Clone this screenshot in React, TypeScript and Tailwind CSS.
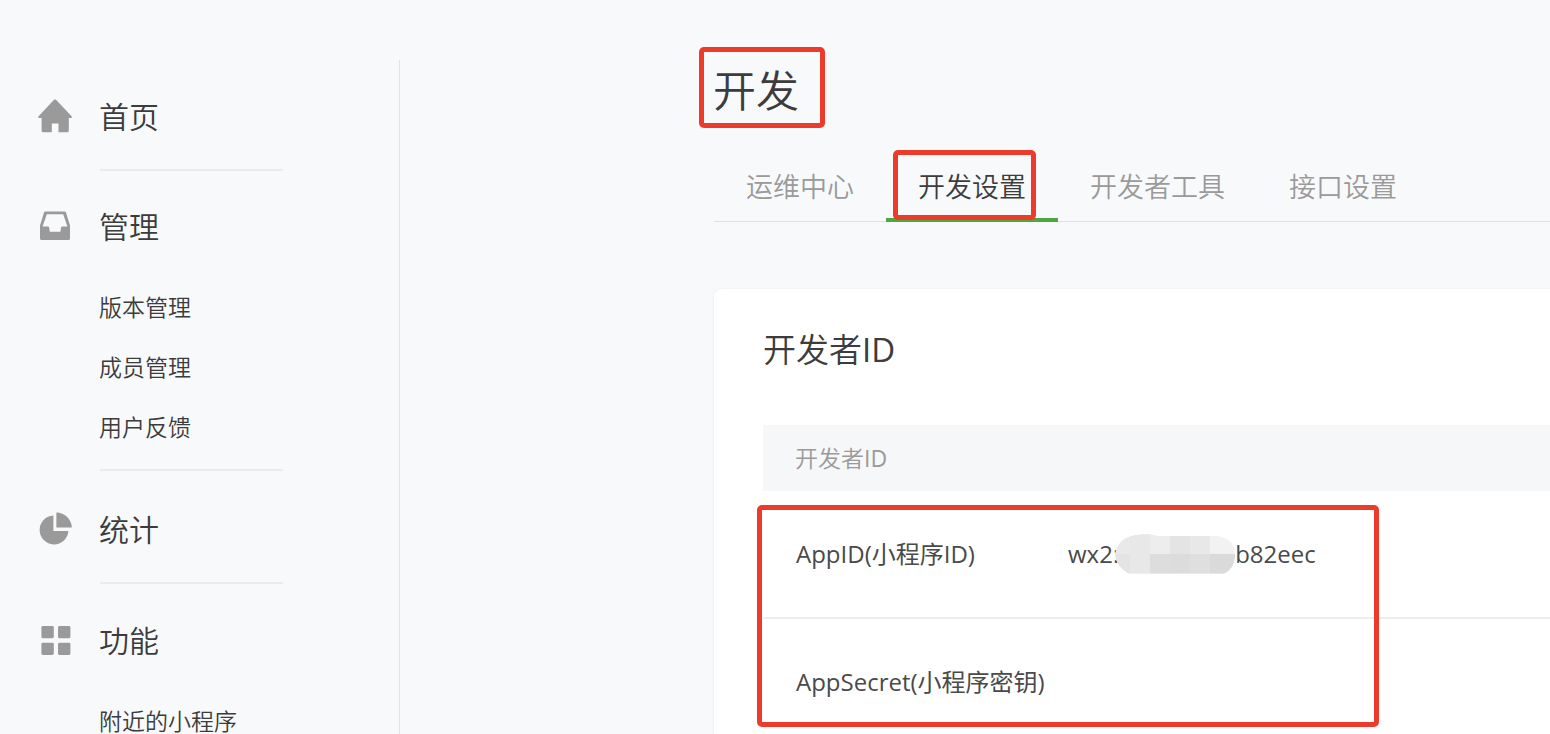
import type { ReactNode } from "react";

const HomeIcon = () => (
  <svg viewBox="0 0 36 36" className="size-9" fill="#9a9a9a" aria-hidden="true">
    <path d="M18 .2 Q18.4 .2 19 .8 L34.6 17.2 Q35.8 18.8 34 19 L31.8 19 L31.8 31.8 Q31.8 33.2 30.4 33.2 L21.5 33.2 L21.5 24.6 L14.8 24.6 L14.8 33.2 L6 33.2 Q4.6 33.2 4.6 31.8 L4.6 19 L2 19 Q.4 18.8 1.6 17.2 L17 .8 Q17.6 .2 18 .2Z" />
  </svg>
);

const InboxIcon = () => (
  <svg viewBox="0 0 36 36" className="size-9" fill="#9a9a9a" aria-hidden="true">
    <path
      fillRule="evenodd"
      d="M8.6 2.4 H27.4 Q28.6 2.4 29 3.6 L33 16.4 V29.4 Q33 31 31.4 31 H4.6 Q3 31 3 29.4 V16.4 L7 3.6 Q7.4 2.4 8.6 2.4Z M9.8 5.2 L5.6 17.4 H11 Q12 17.4 12.2 18.8 L12.8 22.8 H23.4 L24 18.8 Q24.2 17.4 25.2 17.4 H30.4 L26.2 5.2Z"
    />
  </svg>
);

const PieIcon = () => (
  <svg viewBox="0 0 36 36" className="size-9" fill="#9a9a9a" aria-hidden="true">
    <path d="M16.4 3.6 V19 H31.4 A14.4 14.4 0 1 1 16.4 3.6Z" />
    <path d="M19.4 .4 A15.6 15.6 0 0 1 34.8 15.6 H19.4Z" />
  </svg>
);

const GridIcon = () => (
  <svg viewBox="0 0 36 36" className="size-9" fill="#9a9a9a" aria-hidden="true">
    <rect x="4.4" y="3" width="12.4" height="12.2" rx="1.4" />
    <rect x="21" y="3" width="12.4" height="12.2" rx="1.4" />
    <rect x="4.4" y="19.8" width="12.4" height="12.2" rx="1.4" />
    <rect x="21" y="19.8" width="12.4" height="12.2" rx="1.4" />
  </svg>
);

function Highlight({ className }: { className: string }) {
  return (
    <span
      aria-hidden="true"
      className={`pointer-events-none absolute z-10 rounded-[5px] border-5 border-[#ed3b2b] ${className}`}
    />
  );
}

function NavHeading({ icon, children }: { icon: ReactNode; children: ReactNode }) {
  return (
    <a href="#" className="flex h-[42px] items-center pl-[37px] text-[30px] leading-[42px]">
      <span className="w-[62px]">{icon}</span>
      {children}
    </a>
  );
}

function NavList({ items }: { items: string[] }) {
  return (
    <ul className="mt-[29px] pl-[99px] text-[23px] leading-[60px]">
      {items.map((item) => (
        <li key={item} className="h-[60px]">
          <a href="#">{item}</a>
        </li>
      ))}
    </ul>
  );
}

const Divider = () => <hr className="ml-[100px] w-[183px] border-t-2 border-[#ebecee]" />;

const tabs = ["运维中心", "开发设置", "开发者工具", "接口设置"];

const Mosaic = () => (
  <svg viewBox="0 0 120 40" className="-ml-1 h-10 w-[120px] shrink-0" aria-hidden="true">
    <defs>
      <clipPath id="pill">
        <path d="M22 1 Q34 -1 42 2 H98 Q120 3 120 22 Q119 35 109 39.5 H14 Q1 33 0 20 Q3 3 22 1Z" />
      </clipPath>
    </defs>
    <g clipPath="url(#pill)">
      <rect width="120" height="40" fill="#e9e9e9" />
      <rect y="20" width="15" height="20" fill="#e4e4e4" />
      <rect x="15" width="20" height="40" fill="#e8e8e8" />
      <rect x="35" width="20" height="20" fill="#ededed" />
      <rect x="55" width="20" height="20" fill="#e4e4e4" />
      <rect x="75" width="20" height="20" fill="#e8e8e8" />
      <rect x="95" width="25" height="20" fill="#f2f2f2" />
      <rect x="35" y="20" width="20" height="20" fill="#dddddd" />
      <rect x="55" y="20" width="20" height="20" fill="#dcdcdc" />
      <rect x="75" y="20" width="20" height="20" fill="#dfdfdf" />
      <rect x="95" y="20" width="25" height="20" fill="#dadada" />
    </g>
  </svg>
);

export default function App() {
  return (
    <div className="flex h-screen overflow-hidden bg-[#f8f9fb] pt-[60px] font-['Open_Sans','Noto_Sans_CJK_SC',sans-serif] font-[350] text-[#3c3c3c]">
      <nav className="w-[400px] shrink-0 border-r border-[#e1e3e6]">
        <section className="pt-9 pb-[31px]">
          <NavHeading icon={<HomeIcon />}>首页</NavHeading>
        </section>
        <Divider />
        <section className="pt-[35px] pb-3">
          <NavHeading icon={<InboxIcon />}>管理</NavHeading>
          <NavList items={["版本管理", "成员管理", "用户反馈"]} />
        </section>
        <Divider />
        <section className="pt-[38px] pb-[31px]">
          <NavHeading icon={<PieIcon />}>统计</NavHeading>
        </section>
        <Divider />
        <section className="pt-9">
          <NavHeading icon={<GridIcon />}>功能</NavHeading>
          <NavList items={["附近的小程序"]} />
        </section>
      </nav>

      <main className="min-w-0 flex-1 pl-[314px]">
        <h1 className="relative -ml-px w-fit text-[43px] leading-[62px]">
          开发
          <Highlight className="-top-[13px] -left-[14px] h-[81px] w-[126px]" />
        </h1>

        <div role="tablist" className="mt-8 flex h-[68px] border-b border-[#dfe1e4] text-[27px]">
          {tabs.map((tab) => {
            const active = tab === "开发设置";
            return (
              <button
                key={tab}
                type="button"
                role="tab"
                aria-selected={active}
                className={
                  active
                    ? "relative h-[68px] shrink-0 border-b-4 border-[#4fa83d] px-8 pt-[3px]"
                    : "h-[68px] shrink-0 border-b-4 border-transparent px-8 pt-[3px] text-[#9a9a9a]"
                }
              >
                {tab}
                {active && <Highlight className="-top-1 left-[7px] h-[70px] w-[143px]" />}
              </button>
            );
          })}
        </div>

        <section className="mt-[67px] h-full rounded-l-lg bg-white pl-[49px] shadow-[0_0_2px_#e4e6e8]">
          <h2 className="pt-[37px] text-[33px] leading-[48px]">
            开发者<span className="font-normal">ID</span>
          </h2>
          <div className="relative mt-[51px]">
            <table className="w-full table-fixed border-collapse text-left">
              <colgroup>
                <col className="w-[305px]" />
                <col />
              </colgroup>
              <thead className="text-[23px]">
                <tr className="h-[66px] bg-[#f6f7f9] text-[#9a9a9a]">
                  <th colSpan={2} className="pl-8 font-[350]">
                    开发者<span className="font-normal">ID</span>
                  </th>
                </tr>
              </thead>
              <tbody className="text-2xl font-normal text-[#4a4a4a]">
                <tr className="h-[127px] border-b-2 border-[#ededed]">
                  <td className="pl-[33px]">AppID(小程序ID)</td>
                  <td>
                    <span className="flex items-center">
                      wx2:
                      <Mosaic />
                      b82eec
                    </span>
                  </td>
                </tr>
                <tr className="h-[127px]">
                  <td className="pl-[33px] whitespace-nowrap">AppSecret(小程序密钥)</td>
                  <td />
                </tr>
              </tbody>
            </table>
            <Highlight className="top-[80px] -left-[6px] h-[222px] w-[622px]" />
          </div>
        </section>
      </main>
    </div>
  );
}
